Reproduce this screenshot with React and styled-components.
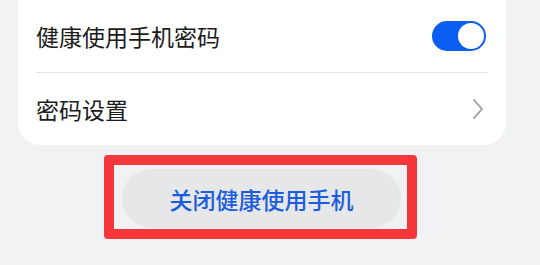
import styled, { createGlobalStyle } from "styled-components";

const GlobalStyle = createGlobalStyle`
  html, body {
    margin: 0;
    padding: 0;
    background: #f1f2f4;
    font-family: "Noto Sans CJK SC", "Noto Sans", sans-serif;
  }
`;

const Page = styled.div`
  width: 540px;
  height: 265px;
  overflow: hidden;
  background: #f1f2f4;
`;

const Card = styled.div`
  margin: -20px 34px 0 18px;
  padding: 20px 18px 0;
  background: #ffffff;
  border-radius: 22px;
`;

const Row = styled.div`
  height: 72px;
  display: flex;
  align-items: center;
  justify-content: space-between;
  border-bottom: ${({ divider }) => (divider ? "1px solid #e3e3e5" : "none")};
`;

const Label = styled.span`
  font-size: 23px;
  color: #1b1b1b;
  letter-spacing: 0;
`;

const Toggle = styled.div`
  width: 54px;
  height: 30px;
  border-radius: 15px;
  background: #0b5ef0;
  display: flex;
  align-items: center;
  justify-content: flex-end;
  padding: 0 2px;
  box-sizing: border-box;
  margin-right: 2px;
`;

const Knob = styled.div`
  width: 26px;
  height: 26px;
  border-radius: 50%;
  background: #ffffff;
`;

const Chevron = styled.svg`
  width: 12px;
  height: 22px;
  margin-right: 4px;
`;

const ActionArea = styled.div`
  display: flex;
  padding: 10px 0 0 104px;
`;

const Highlight = styled.div`
  border: 10px solid #f5363a;
  border-radius: 4px;
  padding: 4px 6px 1px 8px;
  display: flex;
`;

const Button = styled.button`
  width: 279px;
  height: 59px;
  border: none;
  border-radius: 30px;
  background: #e6e7e9;
  color: #1c5ddc;
  font-family: "Noto Sans CJK SC", "Noto Sans", sans-serif;
  font-size: 23px;
  font-weight: 500;
  padding: 0;
  display: flex;
  align-items: center;
  justify-content: center;
`;

export default function App() {
  return (
    <Page>
      <GlobalStyle />
      <Card>
        <Row divider>
          <Label>健康使用手机密码</Label>
          <Toggle>
            <Knob />
          </Toggle>
        </Row>
        <Row>
          <Label>密码设置</Label>
          <Chevron viewBox="0 0 12 22">
            <path d="M2 2 L10 11 L2 20" fill="none" stroke="#9a9a9c" strokeWidth="1.8" strokeLinecap="round" strokeLinejoin="round" />
          </Chevron>
        </Row>
      </Card>
      <ActionArea>
        <Highlight>
          <Button>关闭健康使用手机</Button>
        </Highlight>
      </ActionArea>
    </Page>
  );
}
